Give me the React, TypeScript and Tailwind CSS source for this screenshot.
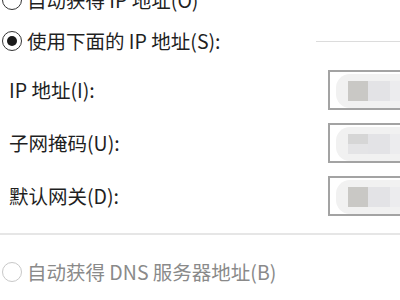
const font = { fontFamily: '"Noto Sans CJK SC", "Noto Sans", sans-serif' };

function Radio({ checked, disabled }: { checked?: boolean; disabled?: boolean }) {
  return (
    <span
      className={`flex h-[20px] w-[20px] shrink-0 items-center justify-center rounded-full border-[1.5px] bg-white ${
        disabled ? 'border-[#c8c8c8]' : 'border-[#333333]'
      }`}
    >
      {checked && <span className="h-[10px] w-[10px] rounded-full bg-[#1a1a1a]" />}
    </span>
  );
}

function Field({ label, variant }: { label: string; variant: 'a' | 'b' }) {
  return (
    <div className="flex h-[40px] items-center justify-between">
      <span className="pl-[9px] text-[19.5px] text-[#1f1f1f]">{label}</span>
      <div className="relative h-[40px] w-[72px] overflow-hidden border-2 border-r-0 border-[#a3a3a3] bg-white">
        {/* blurred value mask */}
        <div className="absolute left-[6px] top-[2px] h-[34px] w-[90px] rounded-l-[14px] bg-[#f1f1f1]" />
        <div className="absolute left-[18px] top-[9px] flex h-[20px]">
          {variant === 'a' ? (
            <span className="h-[20px] w-[20px] bg-[#c9c8c5]" />
          ) : (
            <span className="flex h-[20px] w-[20px] flex-col">
              <span className="h-[10px] bg-[#d6d6d6]" />
              <span className="h-[10px] bg-[#e4e4e6]" />
            </span>
          )}
          <span className="h-[20px] w-[22px] bg-[#e3e3e6]" />
          <span className="h-[20px] w-[30px] bg-[#ececee]" />
        </div>
      </div>
    </div>
  );
}

export default function App() {
  return (
    <div className="h-[300px] w-[400px] overflow-hidden bg-white" style={font}>
      <div className="flex flex-col">
        <div className="-mt-[12px] flex h-[24px] items-center gap-[5px] pl-[2px] text-[19.5px] text-[#1f1f1f]">
          <Radio />
          <span>自动获得 IP 地址(O)</span>
        </div>

        <div className="flex h-[58px] items-center gap-[5px] pl-[2px] text-[19.5px] text-[#1f1f1f]">
          <Radio checked />
          <span>使用下面的 IP 地址(S):</span>
          <span className="ml-auto h-px w-[84px] bg-[#dcdcdc]" />
        </div>

        <div className="flex flex-col gap-[13px]">
          <Field label="IP 地址(I):" variant="a" />
          <Field label="子网掩码(U):" variant="b" />
          <Field label="默认网关(D):" variant="a" />
        </div>

        <div className="mt-[17px] h-[2px] bg-[#e6e6e6]" />

        <div className="flex h-[74px] items-center gap-[5px] pl-[2px] text-[19.5px] text-[#8a8a8a]">
          <Radio disabled />
          <span>自动获得 DNS 服务器地址(B)</span>
        </div>
      </div>
    </div>
  );
}
